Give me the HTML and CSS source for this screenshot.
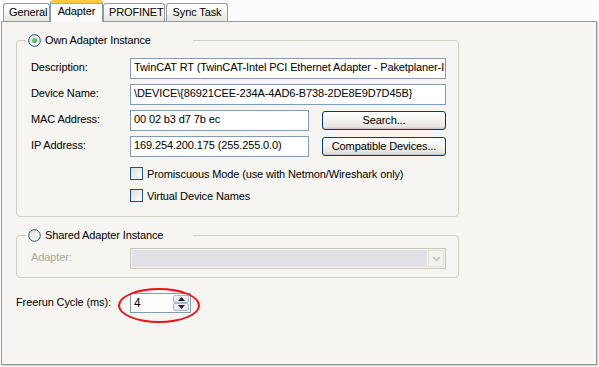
FILE: index.html
```html
<!DOCTYPE html>
<html>
<head>
<meta charset="utf-8">
<link rel="stylesheet" href="styles.css">
</head>
<body>
<div class="tabs">
  <div class="tab t-general">General</div>
  <div class="tab active">Adapter</div>
  <div class="tab t-profinet">PROFINET</div>
  <div class="tab t-sync">Sync Task</div>
</div>
<div class="panel">
  <fieldset class="group g-own">
    <legend>
      <svg class="radio" width="13" height="13" viewBox="0 0 13 13">
        <defs><linearGradient id="rg1" x1="0" y1="0" x2="1" y2="1"><stop offset="0" stop-color="#dcdcd7"/><stop offset="1" stop-color="#ffffff"/></linearGradient>
        <radialGradient id="dot" cx="0.4" cy="0.4" r="0.6"><stop offset="0" stop-color="#8ee28e"/><stop offset="1" stop-color="#1f9a1f"/></radialGradient></defs>
        <circle cx="6.5" cy="6.5" r="5.8" fill="url(#rg1)" stroke="#1c5180" stroke-width="1"/>
        <circle cx="6.5" cy="6.5" r="2.4" fill="url(#dot)"/>
      </svg>
      <span>Own Adapter Instance</span>
    </legend>
    <div class="group-body">
      <div class="row">
        <span class="lbl">Description:</span>
        <div class="field wide">TwinCAT RT (TwinCAT-Intel PCI Ethernet Adapter - Paketplaner-I</div>
      </div>
      <div class="row">
        <span class="lbl">Device Name:</span>
        <div class="field wide">\DEVICE\{86921CEE-234A-4AD6-B738-2DE8E9D7D45B}</div>
      </div>
      <div class="row">
        <span class="lbl">MAC Address:</span>
        <div class="field short">00 02 b3 d7 7b ec</div>
        <div class="btn">Search...</div>
      </div>
      <div class="row">
        <span class="lbl">IP Address:</span>
        <div class="field short">169.254.200.175 (255.255.0.0)</div>
        <div class="btn">Compatible Devices...</div>
      </div>
      <div class="check-row first">
        <span class="check"></span><span>Promiscuous Mode (use with Netmon/Wireshark only)</span>
      </div>
      <div class="check-row">
        <span class="check"></span><span>Virtual Device Names</span>
      </div>
    </div>
  </fieldset>

  <fieldset class="group g-shared">
    <legend>
      <svg class="radio" width="13" height="13" viewBox="0 0 13 13">
        <defs><linearGradient id="rg2" x1="0" y1="0" x2="1" y2="1"><stop offset="0" stop-color="#dcdcd7"/><stop offset="1" stop-color="#ffffff"/></linearGradient></defs>
        <circle cx="6.5" cy="6.5" r="5.8" fill="url(#rg2)" stroke="#1c5180" stroke-width="1"/>
      </svg>
      <span>Shared Adapter Instance</span>
    </legend>
    <div class="group-body shared-body">
      <div class="row">
        <span class="lbl disabled">Adapter:</span>
        <div class="combo">
          <div class="combo-text"></div>
          <div class="combo-btn">
            <svg width="9" height="6" viewBox="0 0 9 6"><path d="M1 1 L4.5 4.5 L8 1" fill="none" stroke="#c3c3c3" stroke-width="1.6"/></svg>
          </div>
        </div>
      </div>
    </div>
  </fieldset>

  <div class="freerun">
    <span class="lbl-wide">Freerun Cycle (ms):</span>
    <div class="spin">
      <span class="spin-val">4</span>
      <div class="spin-btns">
        <div class="spin-btn"><svg width="7" height="4" viewBox="0 0 7 4"><path d="M0 4 L3.5 0 L7 4 Z" fill="#222"/></svg></div>
        <div class="spin-btn"><svg width="7" height="4" viewBox="0 0 7 4"><path d="M0 0 L3.5 4 L7 0 Z" fill="#222"/></svg></div>
      </div>
    </div>
    <div class="highlight"></div>
  </div>
</div>
</body>
</html>
```
FILE: styles.css
```css
html, body {
  margin: 0;
  padding: 0;
}
body {
  width: 599px;
  height: 367px;
  overflow: hidden;
  background: #fcfcfe;
  font: 11px "Liberation Sans", Arial, sans-serif;
  letter-spacing: -0.12px;
  color: #000;
}

/* Tabs */
.tabs {
  display: flex;
  align-items: flex-end;
  height: 21px;
  padding-left: 3px;
  position: relative;
  z-index: 2;
}
.tab {
  box-sizing: border-box;
  height: 18px;
  line-height: 17px;
  padding: 0 5px;
  border: 1px solid #919b9c;
  border-bottom: none;
  border-radius: 3px 3px 0 0;
  background: linear-gradient(#ffffff, #f3f3ef 60%, #e6e5de);
  white-space: nowrap;
}
.t-general { width: 47px; text-align: center; }
.t-profinet { width: 62px; text-align: center; }
.t-sync { width: 62px; text-align: center; margin-left: 1px; }
.tab.active {
  height: 22px;
  width: 53px;
  margin-bottom: -1px;
  border-top: 3px solid #ffc83c;
  box-shadow: inset 0 1px 0 #e8a13a;
  background: #fbfbfa;
  line-height: 17px;
  text-align: center;
  padding: 0;
}

/* Panel */
.panel {
  box-sizing: border-box;
  margin-left: 1px;
  width: 596px;
  height: 344px;
  border: 1px solid #919b9c;
  box-shadow: 1px 1px 0 #d0cec4;
  background: #f6f5f1;
  padding: 12px 0 0 14px;
  position: relative;
}

/* Group boxes */
.group {
  box-sizing: border-box;
  width: 443px;
  margin: 0;
  padding: 0;
  border: 1px solid #d0d0bf;
  border-radius: 4px;
}
.group legend {
  box-sizing: border-box;
  width: 167px;
  height: 13px;
  margin-left: 9px;
  padding: 0 0 0 2px;
  display: flex;
  align-items: center;
  line-height: 13px;
  background: #f6f5f1;
}
.radio {
  flex: none;
  margin-right: 4px;
}
.group-body {
  padding: 11px 0 14px 14px;
}
.g-shared {
  margin-top: 12px;
}
.shared-body {
  padding: 6px 0 8px 14px;
}

/* Rows */
.row {
  display: flex;
  align-items: center;
  height: 21px;
  margin-bottom: 5px;
}
.shared-body .row { margin-bottom: 0; }
.lbl {
  width: 99px;
  flex: none;
  padding-bottom: 3px;
}
.lbl.disabled { color: #aca899; }
.field {
  box-sizing: border-box;
  height: 21px;
  border: 1px solid #7f9db9;
  background: #fff;
  padding: 0 0 0 3px;
  line-height: 16px;
  white-space: nowrap;
  overflow: hidden;
}
.field.wide { width: 316px; }
.field.short { width: 179px; }
.btn {
  box-sizing: border-box;
  width: 124px;
  height: 19px;
  margin-left: 13px;
  border: 1px solid #003c74;
  border-radius: 3px;
  background: linear-gradient(#ffffff, #f4f4f0 45%, #e6e5de 85%, #d6d0c5);
  box-shadow: inset 0 -1px 0 #c6c5d7;
  text-align: center;
  line-height: 16px;
}

/* Check boxes */
.check-row {
  display: flex;
  align-items: center;
  height: 13px;
  margin-left: 99px;
  margin-top: 9px;
}
.check-row.first { margin-top: 10px; }
.check {
  box-sizing: border-box;
  width: 13px;
  height: 13px;
  border: 1px solid #1c5180;
  background: linear-gradient(135deg, #dcdcd7, #ffffff);
  margin-right: 4px;
  flex: none;
}

/* Combo (disabled) */
.combo {
  box-sizing: border-box;
  width: 316px;
  height: 21px;
  border: 1px solid #c9c7ba;
  background: #f5f4ea;
  display: flex;
  padding: 1px;
}
.combo-text {
  flex: 1;
  background: #e1e0e4;
}
.combo-btn {
  width: 16px;
  margin-left: 1px;
  box-sizing: border-box;
  border: 1px solid #e3e1d6;
  background: #f4f3ee;
  display: flex;
  align-items: center;
  justify-content: center;
}

/* Freerun */
.freerun {
  display: flex;
  align-items: center;
  margin-top: 15px;
  height: 20px;
  position: relative;
}
.lbl-wide {
  width: 114px;
  flex: none;
  padding-bottom: 2px;
}
.spin {
  box-sizing: border-box;
  width: 61px;
  height: 20px;
  border: 1px solid #7f9db9;
  background: #fff;
  display: flex;
  align-items: stretch;
  padding: 1px 1px 1px 3px;
}
.spin-val {
  flex: 1;
  line-height: 16px;
  font-size: 12px;
}
.spin-btns {
  width: 16px;
  display: flex;
  flex-direction: column;
}
.spin-btn {
  flex: 1;
  box-sizing: border-box;
  border: 1px solid #a9b8cd;
  border-radius: 2px;
  background: linear-gradient(#f4f5f8, #dfe4ee);
  display: flex;
  align-items: center;
  justify-content: center;
}
.highlight {
  position: absolute;
  left: 102px;
  top: -5px;
  width: 82px;
  height: 35px;
  box-sizing: border-box;
  border: 2px solid #ee1111;
  border-radius: 50%;
  pointer-events: none;
}
```
